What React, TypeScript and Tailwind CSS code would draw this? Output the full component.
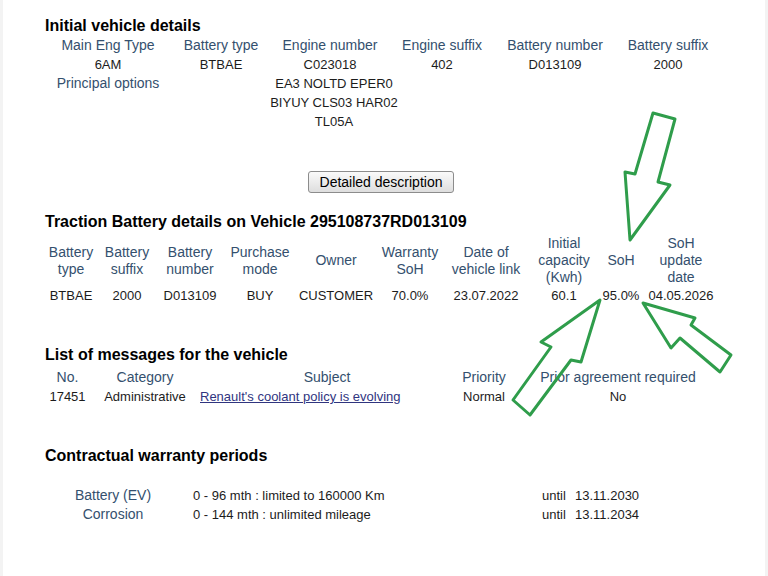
import React from 'react';

const label = 'text-[14px] text-[#34506e] leading-[19px]';
const value = 'text-[13px] text-[#1c1c1c] leading-[19px]';

const batteryCols = [
  { head: ['Battery', 'type'], val: 'BTBAE' },
  { head: ['Battery', 'suffix'], val: '2000' },
  { head: ['Battery', 'number'], val: 'D013109' },
  { head: ['Purchase', 'mode'], val: 'BUY' },
  { head: ['Owner'], val: 'CUSTOMER' },
  { head: ['Warranty', 'SoH'], val: '70.0%' },
  { head: ['Date of', 'vehicle link'], val: '23.07.2022' },
  { head: ['Initial', 'capacity', '(Kwh)'], val: '60.1' },
  { head: ['SoH'], val: '95.0%' },
  { head: ['SoH', 'update', 'date'], val: '04.05.2026' },
];

const Heading: React.FC<{ children: React.ReactNode; className?: string }> = ({ children, className }) => (
  <h2 className={`text-[16px] font-bold text-black leading-[20px] ${className ?? ''}`}>{children}</h2>
);

export default function App() {
  return (
    <div className="relative w-[768px] h-[576px] bg-white overflow-hidden font-['Liberation_Sans',Arial,sans-serif] border-x-[3px] border-[#f3f3f3]">
      <div className="pl-[42px] pt-[16px]">
        {/* Initial vehicle details */}
        <Heading>Initial vehicle details</Heading>
        <div className="grid grid-cols-[126px_100px_118px_106px_120px_106px] text-center whitespace-nowrap">
          <div className={label}>Main Eng Type</div>
          <div className={label}>Battery type</div>
          <div className={label}>Engine number</div>
          <div className={label}>Engine suffix</div>
          <div className={label}>Battery number</div>
          <div className={label}>Battery suffix</div>

          <div className={value}>6AM</div>
          <div className={value}>BTBAE</div>
          <div className={value}>C023018</div>
          <div className={value}>402</div>
          <div className={value}>D013109</div>
          <div className={value}>2000</div>

          <div className={`${label} self-start`}>Principal options</div>
          <div />
          <div className={`${value} flex flex-col items-center pl-[8px]`}>
            <span>EA3 NOLTD EPER0</span>
            <span>BIYUY CLS03 HAR02</span>
            <span>TL05A</span>
          </div>
        </div>

        <button className="mt-[40px] ml-[263px] h-[22px] w-[146px] rounded-[3px] border border-[#8c8c8c] bg-gradient-to-b from-[#fafafa] to-[#dedede] text-[14px] text-black leading-[20px]">
          Detailed description
        </button>

        {/* Traction battery */}
        <Heading className="mt-[18px]">Traction Battery details on Vehicle 295108737RD013109</Heading>
        <div className="mt-[3px] grid grid-cols-[52px_60px_66px_74px_78px_70px_82px_74px_40px_80px] text-center whitespace-nowrap">
          {batteryCols.map((c, i) => (
            <div key={i} className="h-[51px] flex flex-col justify-center text-[14px] text-[#34506e] leading-[17px]">
              {c.head.map((h, j) => (
                <span key={j}>{h}</span>
              ))}
            </div>
          ))}
          {batteryCols.map((c, i) => (
            <div key={i} className="text-[13px] text-[#1c1c1c] leading-[19px]">
              {c.val}
            </div>
          ))}
        </div>

        {/* Messages */}
        <Heading className="mt-[40px]">List of messages for the vehicle</Heading>
        <div className="mt-[3px] grid grid-cols-[45px_110px_254px_60px_208px] whitespace-nowrap">
          <div className={`${label} text-center`}>No.</div>
          <div className={`${label} text-center`}>Category</div>
          <div className={`${label} text-center`}>Subject</div>
          <div className={`${label} text-center`}>Priority</div>
          <div className={`${label} text-center`}>Prior agreement required</div>

          <div className={`${value} text-center`}>17451</div>
          <div className={`${value} text-center`}>Administrative</div>
          <div className={value}>
            <a className="text-[#30357f] underline">Renault's coolant policy is evolving</a>
          </div>
          <div className={`${value} text-center`}>Normal</div>
          <div className={`${value} text-center`}>No</div>
        </div>

        {/* Warranty */}
        <Heading className="mt-[40px]">Contractual warranty periods</Heading>
        <div className="mt-[20px] grid grid-cols-[136px_361px_33px_auto] whitespace-nowrap">
          <div className={`${label} text-center`}>Battery (EV)</div>
          <div className={`${value} pl-[12px]`}>0 - 96 mth : limited to 160000 Km</div>
          <div className={value}>until</div>
          <div className={value}>13.11.2030</div>

          <div className={`${label} text-center`}>Corrosion</div>
          <div className={`${value} pl-[12px]`}>0 - 144 mth : unlimited mileage</div>
          <div className={value}>until</div>
          <div className={value}>13.11.2034</div>
        </div>
      </div>

      {/* hand-drawn annotation arrows */}
      <svg className="absolute left-0 top-0 pointer-events-none" width="768" height="576" viewBox="0 0 768 576">
        <g fill="none" stroke="#2f9d4b" strokeWidth="3" strokeLinejoin="round">
          <polygon points="650,113 672,119 655,182 667,185 627,240 622,172 632,174" />
          <polygon points="597,300 578,362 568,360 527,415 510,400 548,347 538,342" />
          <polygon points="640,303 692,318 688,325 728,355 717,372 677,338 668,348" />
        </g>
      </svg>
    </div>
  );
}
